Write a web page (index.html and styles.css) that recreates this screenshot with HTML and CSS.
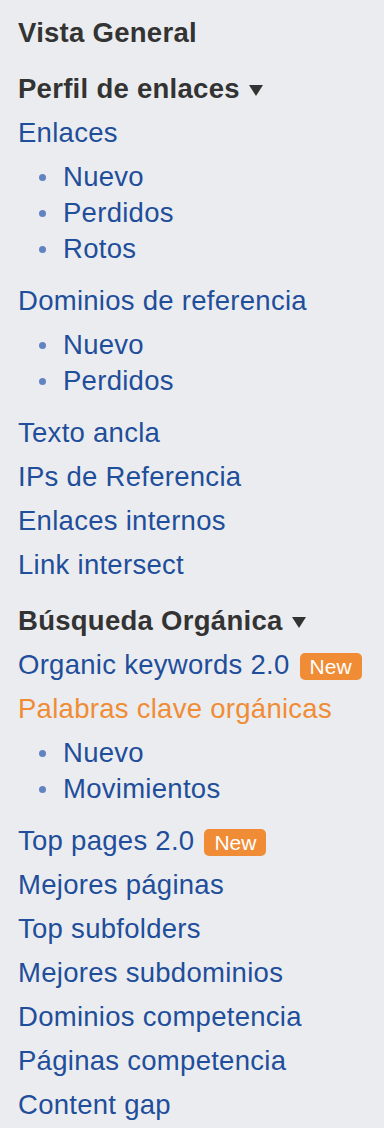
FILE: index.html
```html
<!DOCTYPE html>
<html>
<head>
<meta charset="utf-8">
<link rel="stylesheet" href="styles.css">
</head>
<body>
<nav class="sidebar">
  <div class="heading">Vista General</div>

  <div class="heading section">Perfil de enlaces <span class="caret"></span></div>
  <a class="item">Enlaces</a>
  <ul class="sub">
    <li><a>Nuevo</a></li>
    <li><a>Perdidos</a></li>
    <li><a>Rotos</a></li>
  </ul>
  <a class="item">Dominios de referencia</a>
  <ul class="sub">
    <li><a>Nuevo</a></li>
    <li><a>Perdidos</a></li>
  </ul>
  <a class="item">Texto ancla</a>
  <a class="item">IPs de Referencia</a>
  <a class="item">Enlaces internos</a>
  <a class="item">Link intersect</a>

  <div class="heading section">Búsqueda Orgánica <span class="caret"></span></div>
  <a class="item">Organic keywords 2.0 <span class="badge">New</span></a>
  <a class="item active">Palabras clave orgánicas</a>
  <ul class="sub">
    <li><a>Nuevo</a></li>
    <li><a>Movimientos</a></li>
  </ul>
  <a class="item">Top pages 2.0 <span class="badge">New</span></a>
  <a class="item">Mejores páginas</a>
  <a class="item">Top subfolders</a>
  <a class="item">Mejores subdominios</a>
  <a class="item">Dominios competencia</a>
  <a class="item">Páginas competencia</a>
  <a class="item">Content gap</a>
</nav>
</body>
</html>
```

FILE: styles.css
```css
html, body {
  margin: 0;
  padding: 0;
  background: #ebecef;
}
body {
  font-family: "Liberation Sans", Arial, Helvetica, sans-serif;
  font-size: 27.5px;
  letter-spacing: 0.28px;
  color: #1f4e9b;
}
.sidebar {
  display: flex;
  flex-direction: column;
  align-items: flex-start;
  padding: 15px 0 0 18px;
}
.heading {
  font-weight: bold;
  color: #333333;
  line-height: 36px;
  margin-bottom: 8px;
  display: flex;
  align-items: center;
}
.heading.section {
  margin-top: 12px;
}
.caret {
  display: inline-block;
  width: 0;
  height: 0;
  margin-left: 9px;
  margin-top: 2px;
  border-left: 7px solid transparent;
  border-right: 7px solid transparent;
  border-top: 11px solid #333333;
}
.item {
  line-height: 36px;
  margin-bottom: 8px;
  color: #1f4e9b;
  display: flex;
  align-items: center;
  white-space: nowrap;
}
.item.active {
  color: #f08c36;
}
.sub {
  list-style: none;
  margin: 0 0 16px 0;
  padding: 0;
}
.sub li {
  line-height: 36px;
  display: flex;
  align-items: center;
  padding-left: 21px;
}
.sub li::before {
  content: "";
  width: 7px;
  height: 7px;
  border-radius: 50%;
  background: #6283c2;
  margin-right: 17px;
  margin-top: 1px;
}
.badge {
  display: inline-block;
  background: #f08c36;
  color: #ffffff;
  font-size: 21px;
  letter-spacing: 0;
  line-height: 27px;
  padding: 0 10px;
  border-radius: 5px;
  margin-left: 10px;
  margin-top: 2px;
}
```
